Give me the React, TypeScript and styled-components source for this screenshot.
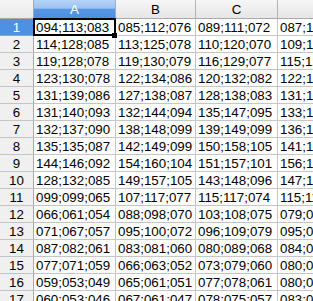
import React from 'react';
import styled, { createGlobalStyle } from 'styled-components';

const GlobalStyle = createGlobalStyle`
    html, body {
        margin: 0;
        padding: 0;
        background: #ffffff;
        overflow: hidden;
    }
`;

const rows: string[][] = [
    ['094;113;083', '085;112;076', '089;111;072', '087;110;071'],
    ['114;128;085', '113;125;078', '110;120;070', '109;121;073'],
    ['119;128;078', '119;130;079', '116;129;077', '115;127;076'],
    ['123;130;078', '122;134;086', '120;132;082', '122;133;081'],
    ['131;139;086', '127;138;087', '128;138;083', '131;141;088'],
    ['131;140;093', '132;144;094', '135;147;095', '133;145;093'],
    ['132;137;090', '138;148;099', '139;149;099', '136;146;096'],
    ['135;135;087', '142;149;099', '150;158;105', '141;150;099'],
    ['144;146;092', '154;160;104', '151;157;101', '156;161;104'],
    ['128;132;085', '149;157;105', '143;148;096', '147;153;100'],
    ['099;099;065', '107;117;077', '115;117;074', '115;114;073'],
    ['066;061;054', '088;098;070', '103;108;075', '079;073;058'],
    ['071;067;057', '095;100;072', '096;109;079', '095;096;070'],
    ['087;082;061', '083;081;060', '080;089;068', '084;083;062'],
    ['077;071;059', '066;063;052', '073;079;060', '080;082;063'],
    ['059;053;049', '065;061;051', '077;078;061', '080;081;061'],
    ['060;053;046', '067;061;047', '078;075;057', '083;078;057'],
];

const columns = ['A', 'B', 'C', 'D'];

const Sheet = styled.div`
    display: grid;
    grid-template-columns: 34px 82px 80px 82px 82px;
    grid-auto-rows: 17px;
    grid-template-rows: 19px;
    width: 313px;
    height: 301px;
    overflow: hidden;
    font-family: "Liberation Sans", Arial, sans-serif;
    font-size: 13.33px;
    color: #000000;
`;

const Corner = styled.div`
    box-sizing: border-box;
    background: linear-gradient(#f6f6f6, #e9e9e9);
    border-right: 1px solid #a9a9a9;
    border-bottom: 1px solid #a9a9a9;
`;

const ColHeader = styled.div<{ $active?: boolean }>`
    box-sizing: border-box;
    display: flex;
    align-items: center;
    justify-content: center;
    padding-top: 1px;
    border-right: 1px solid ${p => (p.$active ? '#8fb3dd' : '#b4b4b4')};
    border-bottom: 1px solid #a9a9a9;
    color: ${p => (p.$active ? '#ffffff' : '#000000')};
    background: ${p =>
        p.$active
            ? 'linear-gradient(#b6d4f6 0%, #9cc3f1 45%, #5797e4 52%, #4c8fe2 100%)'
            : 'linear-gradient(#f7f7f7 0%, #eeeeee 50%, #e6e6e6 100%)'};
`;

const RowHeader = styled.div<{ $active?: boolean }>`
    box-sizing: border-box;
    display: flex;
    align-items: center;
    justify-content: center;
    border-right: 1px solid #a9a9a9;
    border-bottom: 1px solid ${p => (p.$active ? '#7fa9dc' : '#c4c4c4')};
    color: ${p => (p.$active ? '#ffffff' : '#000000')};
    background: ${p => (p.$active ? '#4d91e2' : '#f0f0f0')};
`;

const Cell = styled.div<{ $selected?: boolean }>`
    position: relative;
    box-sizing: border-box;
    display: flex;
    align-items: center;
    padding-left: 2px;
    white-space: nowrap;
    overflow: hidden;
    border-right: 1px solid #c6c6c6;
    border-bottom: 1px solid #c6c6c6;
    overflow: ${p => (p.$selected ? 'visible' : 'hidden')};
    z-index: ${p => (p.$selected ? 2 : 1)};
`;

const CellFrame = styled.div`
    position: absolute;
    left: -1px;
    top: -1px;
    right: -1px;
    bottom: -1px;
    border: 2px solid #000000;
    pointer-events: none;
`;

const FillHandle = styled.div`
    position: absolute;
    right: -3px;
    bottom: -4px;
    width: 5px;
    height: 5px;
    background: #000000;
    border: 1px solid #ffffff;
    border-top: none;
    border-left: none;
`;

const App: React.FC = () => {
    return (
        <>
            <GlobalStyle />
            <Sheet>
                <Corner />
                {columns.map((col, index) => (
                    <ColHeader key={col} $active={index === 0}>{col}</ColHeader>
                ))}
                {rows.map((row, r) => (
                    <React.Fragment key={r}>
                        <RowHeader $active={r === 0}>{r + 1}</RowHeader>
                        {row.map((value, c) => {
                            const selected = r === 0 && c === 0;
                            return (
                                <Cell key={c} $selected={selected}>
                                    {value}
                                    {selected && (
                                        <>
                                            <CellFrame />
                                            <FillHandle />
                                        </>
                                    )}
                                </Cell>
                            );
                        })}
                    </React.Fragment>
                ))}
            </Sheet>
        </>
    );
};

export default App;
